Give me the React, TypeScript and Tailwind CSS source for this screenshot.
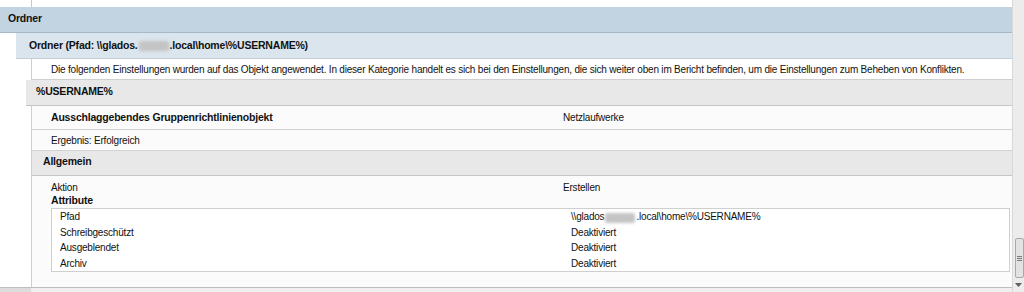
const Blur = () => (
  <span className="inline-block w-[30px] h-[10px] align-middle mx-[1px] rounded-[2px] bg-[#c4c4c4] blur-[1.5px]" />
);

const Row = ({ label, value, bold }: { label: string; value?: React.ReactNode; bold?: boolean }) => (
  <div className="grid grid-cols-[512px_1fr] pl-[19px]">
    <span className={bold ? "text-[10.5px] font-bold tracking-[-0.2px]" : ""}>{label}</span>
    <span>{value}</span>
  </div>
);

const attrs: [string, React.ReactNode][] = [
  [
    "Pfad",
    <>
      \\glados
      <Blur />
      .local\home\%USERNAME%
    </>,
  ],
  ["Schreibgeschützt", "Deaktiviert"],
  ["Ausgeblendet", "Deaktiviert"],
  ["Archiv", "Deaktiviert"],
];

export default function App() {
  return (
    <div className="flex h-[292px] w-[1024px] overflow-hidden bg-white font-['Liberation_Sans',sans-serif] text-[10px] leading-[13px] tracking-[-0.2px] text-[#111]">
      <div className="flex flex-1 flex-col">
        <div className="ml-[31px] h-[7px] shrink-0 border-l border-[#c8c8c8] bg-white" />
        <div className="h-[26px] shrink-0 border-b border-[#a7b8c6] bg-[#c2d4e1] pl-[8px] pt-[5px] text-[10.5px] font-bold">
          Ordner
        </div>
        <div className="ml-[16px] flex flex-col">
          <div className="h-[26px] whitespace-nowrap border-b border-[#c3ced8] bg-[#dbe5ed] pl-[13px] pt-[6px] text-[10.5px] font-bold">
            Ordner (Pfad: \\glados.
            <Blur />
            .local\home\%USERNAME%)
          </div>
          <div className="ml-[15px] h-[21px] whitespace-nowrap border-b border-l border-[#cfcfcf] bg-white pl-[19px] pt-[4px]">
            Die folgenden Einstellungen wurden auf das Objekt angewendet. In dieser Kategorie handelt es sich bei den
            Einstellungen, die sich weiter oben im Bericht befinden, um die Einstellungen zum Beheben von Konflikten.
          </div>
          <div className="ml-[10px] flex flex-col">
            <div className="h-[26px] border-b border-[#c6c6c6] bg-[#e8e8e8] pl-[10px] pt-[5px] text-[10.5px] font-bold">
              %USERNAME%
            </div>
            <div className="ml-[5px] flex h-[181px] flex-col border-l border-[#cfcfcf] bg-[#fbfbfb]">
              <div className="h-[24px] border-b border-[#d2d2d2] pt-[5px]">
                <Row label="Ausschlaggebendes Gruppenrichtlinienobjekt" value="Netzlaufwerke" bold />
              </div>
              <div className="h-[21px] border-b border-[#d2d2d2] pl-[19px] pt-[4px]">Ergebnis: Erfolgreich</div>
              <div className="h-[25px] border-b border-[#c6c6c6] bg-[#e8e8e8] pl-[11px] pt-[4px] text-[10.5px] font-bold">
                Allgemein
              </div>
              <div className="pt-[5px]">
                <Row label="Aktion" value="Erstellen" />
              </div>
              <div className="pl-[19px] text-[10.5px] font-bold">Attribute</div>
              <div className="ml-[19px] mr-[2px] mt-[1px] flex h-[64px] flex-col border border-[#cfcfcf] bg-white">
                {attrs.map(([k, v]) => (
                  <div key={k} className="grid h-[15.5px] shrink-0 grid-cols-[511px_1fr] items-center pl-[8px]">
                    <span>{k}</span>
                    <span>{v}</span>
                  </div>
                ))}
              </div>
            </div>
          </div>
        </div>
        <div className="flex h-[5px] border-t border-[#bdbdbd]">
          <div className="w-[31px] bg-[#dcdcdc]" />
          <div className="flex-1 bg-[#efefef]" />
        </div>
      </div>
      <div className="flex w-[12px] flex-col border-l border-[#d8d8d8] bg-[#ececec]">
        <div className="flex-1" />
        <div className="ml-[2px] flex h-[40px] flex-col items-center justify-center gap-[1px] rounded-[2px] border border-[#a8a8a8] bg-[#e2e2e2]">
          <div className="h-px w-[5px] bg-[#777]" />
          <div className="h-px w-[5px] bg-[#777]" />
          <div className="h-px w-[5px] bg-[#777]" />
        </div>
        <div className="flex h-[14px] items-center justify-center">
          <svg width="7" height="4" viewBox="0 0 7 4">
            <path d="M0 0h7L3.5 4z" fill="#606060" />
          </svg>
        </div>
      </div>
    </div>
  );
}
